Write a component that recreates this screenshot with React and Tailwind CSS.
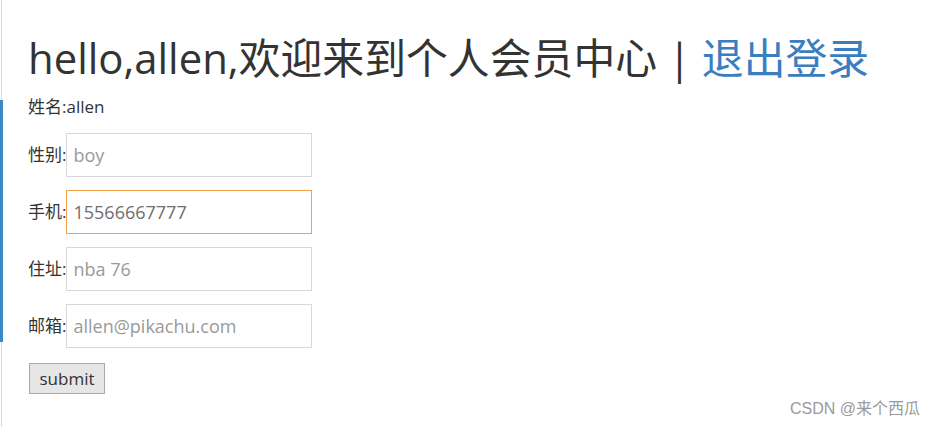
import React from "react";

const font = { fontFamily: '"Open Sans", "Noto Sans CJK SC", sans-serif' };

function Row({ label, value, focused }) {
  return (
    <div className="flex items-center">
      <span className="text-[17px] text-[#333]">{label}</span>
      {focused ? (
        <div className="flex h-[44px] w-[246px] items-center border border-[#f4a24c] pl-[6px] text-[18px] text-[#6e6e6e]">
          {value}
        </div>
      ) : (
        <div className="flex h-[44px] w-[246px] items-center border border-[#d8d8d8] pl-[6px] text-[18px] text-[#9a9a9a]">
          {value}
        </div>
      )}
    </div>
  );
}

export default function App() {
  return (
    <div className="flex h-[427px] w-[936px] overflow-hidden bg-white" style={font}>
      <div className="flex w-[3px] shrink-0 flex-col">
        <div className="ml-px h-[100px] w-px bg-[#dcdcdc]" />
        <div className="h-[242px] w-[3px] bg-[#3b88c6]" />
        <div className="ml-px flex-1 w-px bg-[#dcdcdc]" />
      </div>
      <div className="relative flex flex-1 flex-col pl-[25px]">
        <h1 className="mt-[31px] text-[41.85px] leading-[54px] text-[#333] whitespace-nowrap">
          hello,allen,欢迎来到个人会员中心 | <span className="text-[#3a7ebf]">退出登录</span>
        </h1>
        <div className="mt-[11px] text-[17px] leading-[22px] text-[#333]">姓名:allen</div>
        <div className="mt-[15px] flex flex-col gap-[13px]">
          <Row label="性别:" value="boy" />
          <Row label="手机:" value="15566667777" focused />
          <Row label="住址:" value="nba 76" />
          <Row label="邮箱:" value="allen@pikachu.com" />
        </div>
        <div className="mt-[15px]">
          <button className="ml-px h-[31px] w-[76px] border border-[#a9a9a9] bg-[#e6e6e6] text-[17px] text-[#333]">
            submit
          </button>
        </div>
        <div
          className="absolute right-[16px] bottom-[6px] text-[16px] leading-[24px] text-[#9a9a9a]"
          style={{ fontFamily: '"Liberation Sans", "Noto Sans CJK SC", sans-serif' }}
        >
          CSDN @来个西瓜
        </div>
      </div>
    </div>
  );
}
